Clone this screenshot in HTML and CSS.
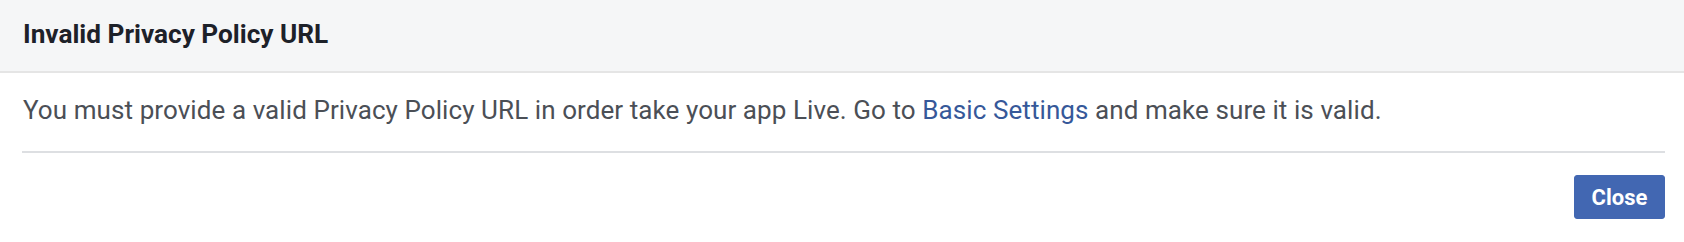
FILE: index.html
```html
<!DOCTYPE html>
<html lang="en">
<head>
    <meta charset="UTF-8">
    <title>Invalid Privacy Policy URL</title>
    <link rel="stylesheet" href="styles.css">
</head>
<body>
    <div class="dialog">
        <div class="dialog-header">Invalid Privacy Policy URL</div>
        <div class="dialog-body">
            <p class="message">You must provide a valid Privacy Policy URL in order take your app Live. Go to <a href="#">Basic Settings</a> and make sure it is valid.</p>
        </div>
        <div class="dialog-footer">
            <button class="btn-primary">Close</button>
        </div>
    </div>
</body>
</html>
```

FILE: styles.css
```css
body {
    margin: 0;
    font-family: Roboto, "Liberation Sans", Arial, sans-serif;
    background-color: #fff;
}
.dialog {
    width: 1684px;
}
.dialog-header {
    height: 73px;
    box-sizing: border-box;
    padding: 19px 23px 0;
    background-color: #f5f6f7;
    border-bottom: 2px solid #e5e5e5;
    color: #1d2129;
    font-size: 26.2px;
    line-height: 30px;
    font-weight: bold;
}
.dialog-body {
    margin: 0 19px 0 22px;
    padding: 21px 0 0 1px;
    height: 80px;
    box-sizing: border-box;
    border-bottom: 2px solid #dddfe2;
}
.message {
    margin: 0;
    color: #4b4f56;
    font-size: 26px;
    letter-spacing: 0.08px;
    line-height: 32px;
}
.message a {
    color: #365899;
    text-decoration: none;
}
.dialog-footer {
    display: flex;
    justify-content: flex-end;
    padding: 22px 19px 0 22px;
}
.btn-primary {
    width: 91px;
    height: 44px;
    border: 1px solid #4267b2;
    border-radius: 3px;
    background-color: #4267b2;
    color: #fff;
    font-family: Roboto, "Liberation Sans", Arial, sans-serif;
    font-size: 22px;
    font-weight: bold;
    padding: 0;
}
```
